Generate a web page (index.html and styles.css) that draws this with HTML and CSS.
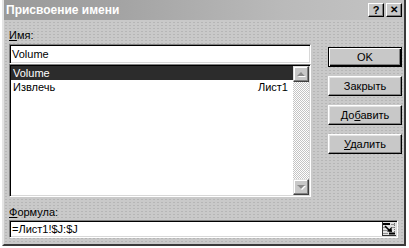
FILE: index.html
```html
<!DOCTYPE html>
<html>
<head>
<meta charset="utf-8">
<title>Присвоение имени</title>
<link rel="stylesheet" href="styles.css">
</head>
<body>
<div class="dialog">
    <div class="titlebar">
        <span class="title">Присвоение имени</span>
        <div class="title-btns">
            <span class="tbtn">?</span>
            <span class="tbtn close">&#x2715;</span>
        </div>
    </div>
    <div class="content">
        <div class="main">
            <div class="left">
                <div class="label"><u>И</u>мя:</div>
                <div class="field name">Volume</div>
                <div class="list">
                    <div class="rows">
                        <div class="row sel"><span>Volume</span><span></span></div>
                        <div class="row"><span>Извлечь</span><span>Лист1</span></div>
                    </div>
                    <div class="scroll">
                        <div class="sbtn"><i class="arrow up"></i></div>
                        <div class="track"></div>
                        <div class="sbtn"><i class="arrow down"></i></div>
                    </div>
                </div>
            </div>
            <div class="buttons">
                <div class="btn default">OK</div>
                <div class="btn">Закрыть</div>
                <div class="btn">До<u>б</u>авить</div>
                <div class="btn"><u>У</u>далить</div>
            </div>
        </div>
        <div class="label formula-label"><u>Ф</u>ормула:</div>
        <div class="field formula">
            <span>=Лист1!$J:$J</span>
            <svg class="collapse" width="14" height="14" viewBox="0 0 14 14">
                <rect x="0" y="0" width="14" height="14" fill="#e2e2e2"/>
                <path d="M0.5 0 V14 M0 13.5 H14" stroke="#303030" stroke-width="1"/>
                <rect x="1" y="1" width="7" height="2" fill="#000"/>
                <path d="M9 2.5 H13 M1 5.5 H5 M9 5.5 H13 M1 8.5 H6 M1 11.5 H6" stroke="#909090" stroke-width="1"/>
                <path d="M12.5 1 V13" stroke="#707070" stroke-width="1" stroke-dasharray="1 1"/>
                <path d="M3 4 L8 9" stroke="#000" stroke-width="1.6"/>
                <polygon points="10,10 5,9.5 9.5,5" fill="#000"/>
                <rect x="7" y="10.5" width="6" height="2" fill="#000"/>
            </svg>
        </div>
    </div>
</div>
</body>
</html>
```
FILE: styles.css
```css
* { margin: 0; padding: 0; box-sizing: border-box; }
body { background: #fff; font-family: "Liberation Sans", Arial, sans-serif; font-size: 11px; color: #000; }
u { text-decoration: underline; text-underline-offset: 1px; }

.dialog { margin-left: 2px; width: 404px; height: 246px; display: flex; flex-direction: column;
    background-color: #c9c9c9;
    background-image: radial-gradient(circle, #b6b6b6 0.6px, transparent 0.9px);
    background-size: 4px 3px;
    border-left: 2px solid #e4e4e4; border-right: 2px solid #3a3a3a; border-bottom: 2px solid #3a3a3a; }

.titlebar { height: 20px; display: flex; justify-content: space-between; align-items: center;
    background: linear-gradient(to right, #9a9a9a, #a4a4a4 30%, #bababa 70%, #c4c4c4); }
.title { color: #fff; font-weight: bold; font-size: 12px; padding-left: 2px; line-height: 20px; }
.title-btns { display: flex; gap: 2px; margin-right: 2px; }
.tbtn { width: 16px; height: 14px; display: flex; align-items: center; justify-content: center;
    background: #c8c8c8; font-weight: bold; font-size: 11px; line-height: 12px;
    border: 1px solid; border-color: #fff #000 #000 #fff; box-shadow: inset -1px -1px #808080; }
.tbtn.close { font-size: 10px; }

.content { flex: 1; padding: 9px 0 0 5px; display: flex; flex-direction: column; }
.main { display: flex; }
.left { width: 302px; display: flex; flex-direction: column; }
.label { height: 13px; line-height: 13px; margin-bottom: 2px; }

.field { background: #fff; border: 1px solid; border-color: #808080 #fff #fff #808080;
    box-shadow: inset 1px 1px #000, inset -1px -1px #d8d8d8; }
.name { height: 20px; line-height: 18px; padding-left: 2px; }

.list { height: 133px; display: flex; padding: 1px; background: #fff; border: 1px solid; border-color: #808080 #fff #fff #808080;
    box-shadow: inset 1px 1px #000, inset -1px -1px #d8d8d8; }
.rows { flex: 1; }
.row { height: 14px; line-height: 14px; display: flex; justify-content: space-between; padding: 0 5px 0 2px; }
.row.sel { background: #2c2c2c; color: #fff; }

.scroll { width: 16px; display: flex; flex-direction: column; }
.sbtn { height: 16px; display: flex; align-items: center; justify-content: center; background: #c8c8c8;
    border: 1px solid; border-color: #e0e0e0 #404040 #404040 #e0e0e0; box-shadow: inset -1px -1px #808080, inset 1px 1px #fff; }
.track { flex: 1; background: repeating-conic-gradient(#c4c4c4 0 25%, #fff 0 50%) 0 0 / 2px 2px; }
.arrow { width: 0; height: 0; border-left: 4px solid transparent; border-right: 4px solid transparent;
    filter: drop-shadow(1px 1px 0 #fff); }
.arrow.up { border-bottom: 4px solid #8a8a8a; }
.arrow.down { border-top: 4px solid #8a8a8a; }

.buttons { margin: 18px 0 0 17px; width: 74px; display: flex; flex-direction: column; gap: 9px; }
.btn { height: 20px; line-height: 18px; text-align: center; background: #c8c8c8;
    border: 1px solid; border-color: #fff #000 #000 #fff; box-shadow: inset -1px -1px #808080, inset 1px 1px #e4e4e4; }
.btn.default { border-color: #000; box-shadow: inset 1px 1px #fff, inset -1px -1px #000, inset -2px -2px #808080; }

.formula-label { margin-top: 9px; margin-bottom: 1px; }
.formula { width: 389px; height: 18px; display: flex; align-items: center; justify-content: space-between; padding: 0 1px 0 2px; }
.collapse { display: block; }
```
